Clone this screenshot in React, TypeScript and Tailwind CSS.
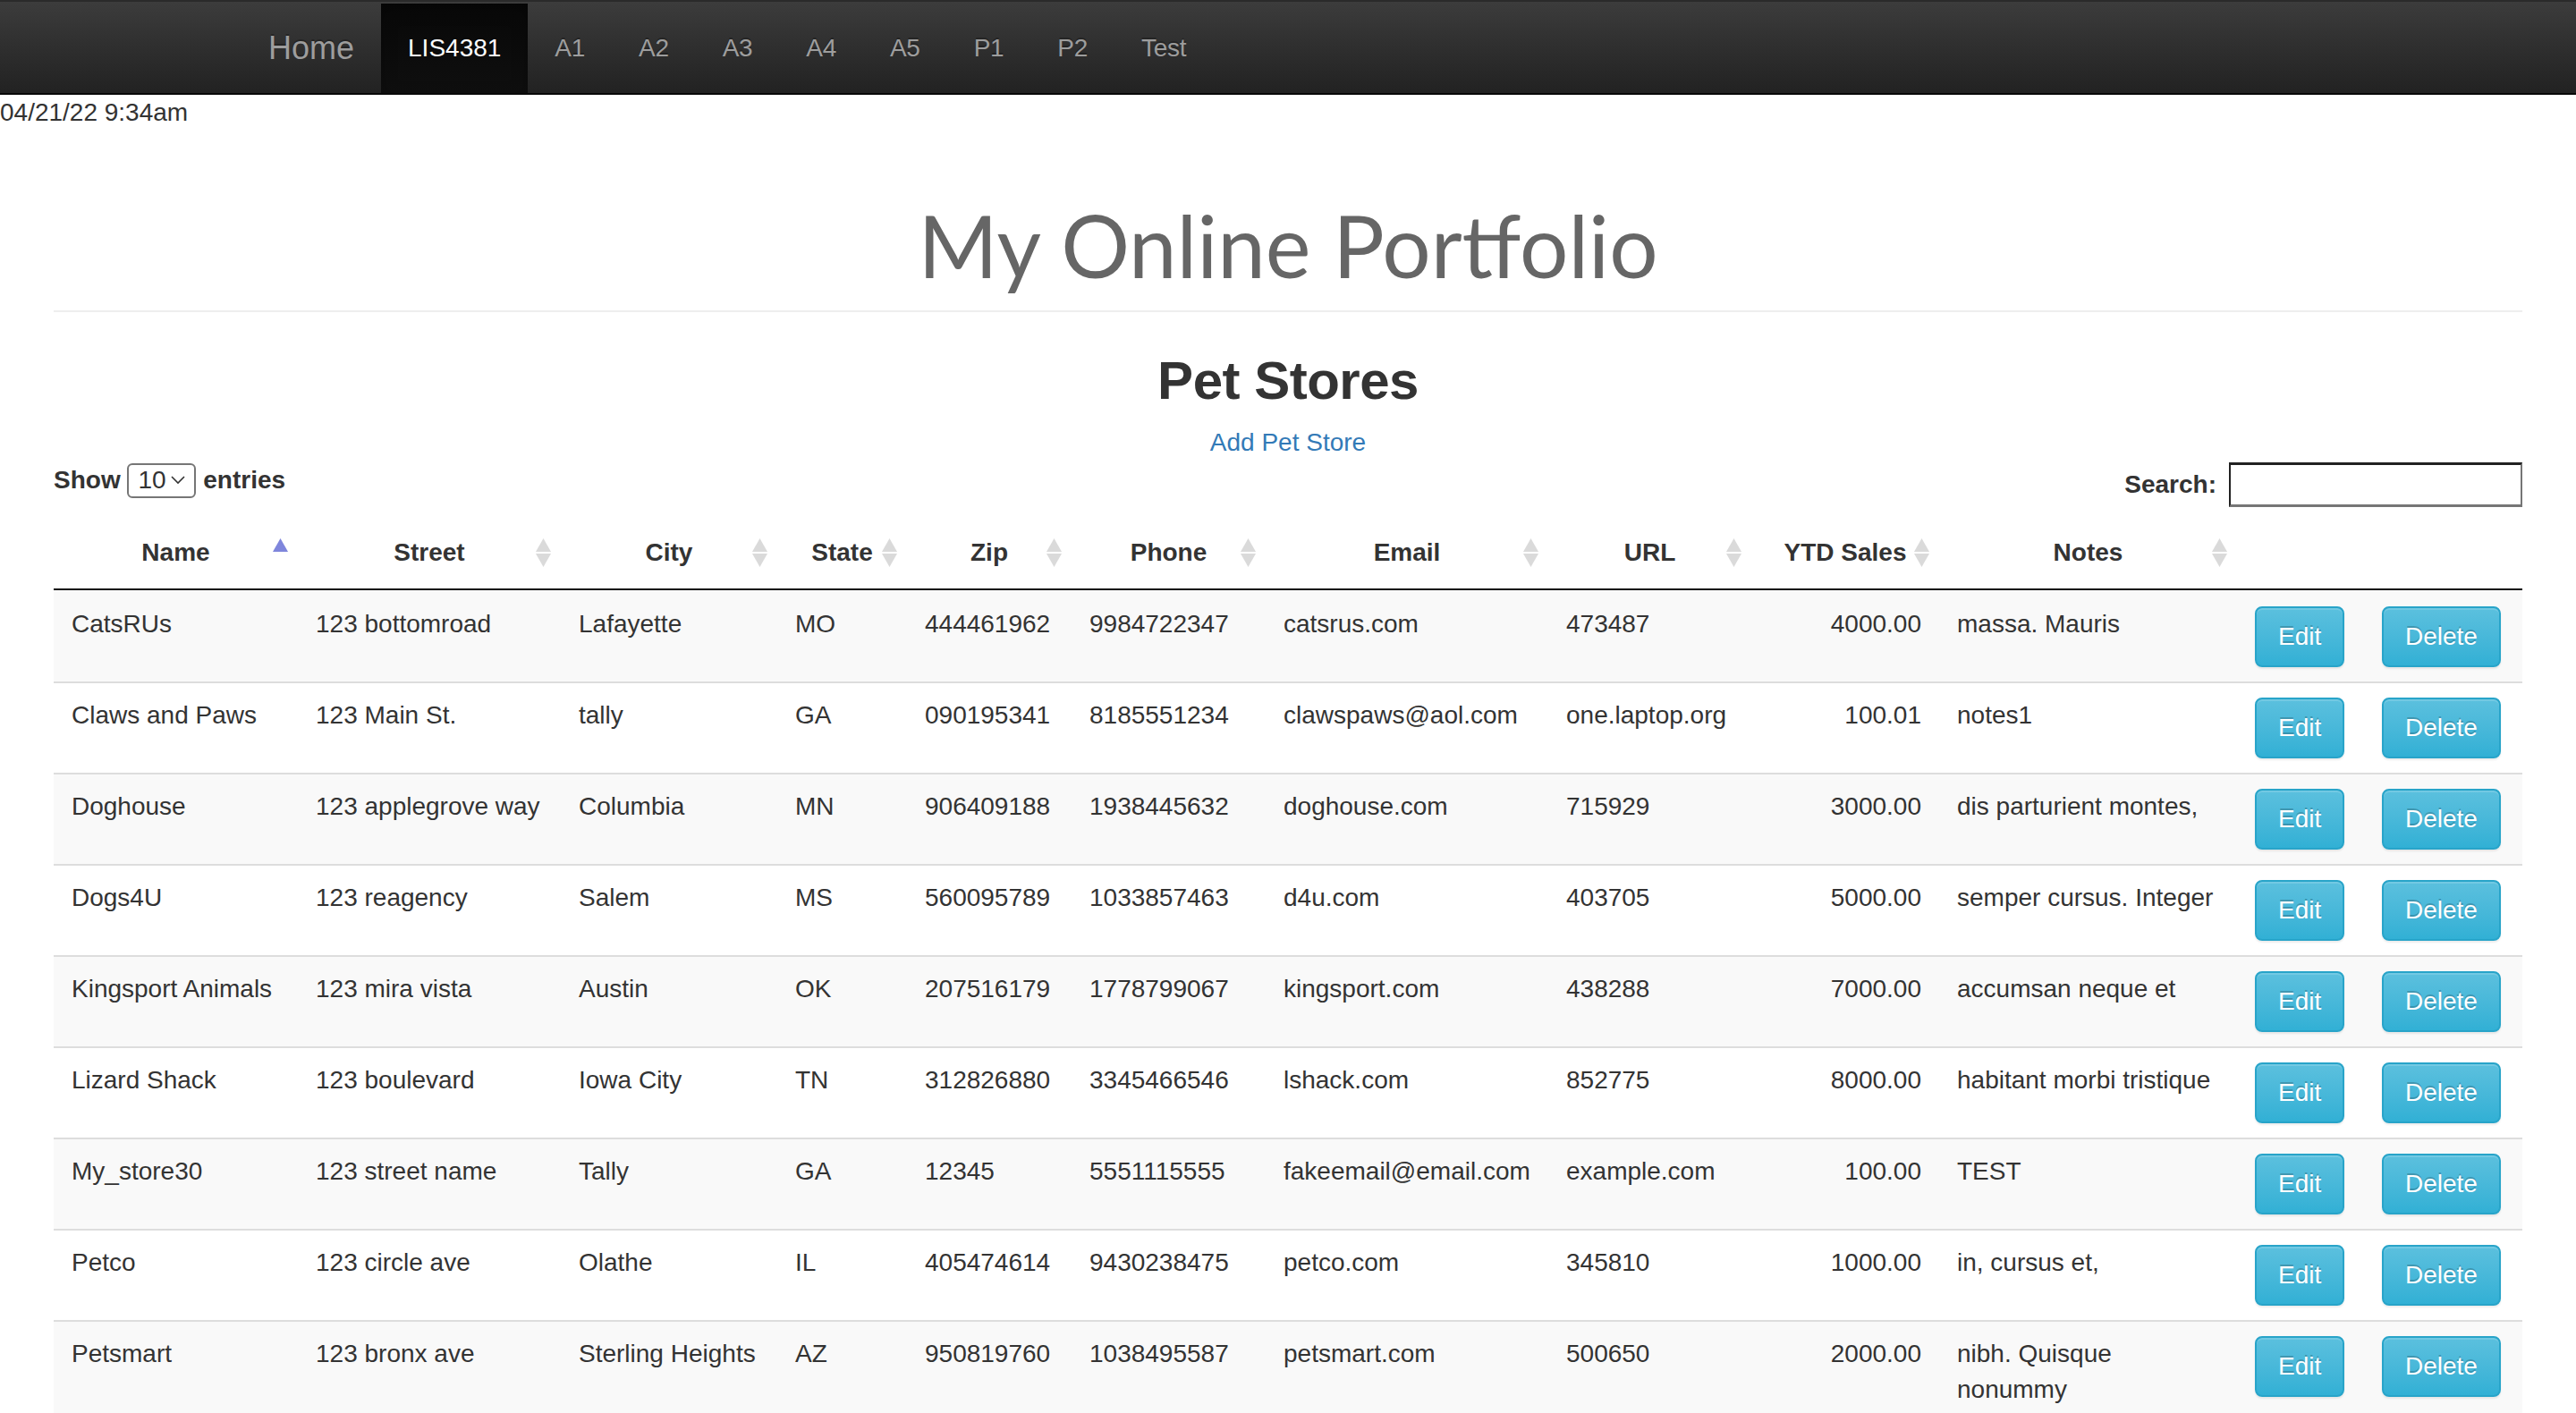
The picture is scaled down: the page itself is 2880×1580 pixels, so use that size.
import React from "react";

type Row = string[];

const rows: Row[] = [
  ["CatsRUs", "123 bottomroad", "Lafayette", "MO", "444461962", "9984722347", "catsrus.com", "473487", "4000.00", "massa. Mauris"],
  ["Claws and Paws", "123 Main St.", "tally", "GA", "090195341", "8185551234", "clawspaws@aol.com", "one.laptop.org", "100.01", "notes1"],
  ["Doghouse", "123 applegrove way", "Columbia", "MN", "906409188", "1938445632", "doghouse.com", "715929", "3000.00", "dis parturient montes,"],
  ["Dogs4U", "123 reagency", "Salem", "MS", "560095789", "1033857463", "d4u.com", "403705", "5000.00", "semper cursus. Integer"],
  ["Kingsport Animals", "123 mira vista", "Austin", "OK", "207516179", "1778799067", "kingsport.com", "438288", "7000.00", "accumsan neque et"],
  ["Lizard Shack", "123 boulevard", "Iowa City", "TN", "312826880", "3345466546", "lshack.com", "852775", "8000.00", "habitant morbi tristique"],
  ["My_store30", "123 street name", "Tally", "GA", "12345", "5551115555", "fakeemail@email.com", "example.com", "100.00", "TEST"],
  ["Petco", "123 circle ave", "Olathe", "IL", "405474614", "9430238475", "petco.com", "345810", "1000.00", "in, cursus et,"],
  ["Petsmart", "123 bronx ave", "Sterling Heights", "AZ", "950819760", "1038495587", "petsmart.com", "500650", "2000.00", "nibh. Quisque nonummy"],
];

const headers = ["Name", "Street", "City", "State", "Zip", "Phone", "Email", "URL", "YTD Sales", "Notes"];

function SortBoth() {
  return (
    <svg className="absolute right-[10px] top-[24px]" width="19" height="32" viewBox="0 0 19 32">
      <polygon points="1,15 9.5,0 18,15" fill="#dadada" />
      <polygon points="1,17 18,17 9.5,32" fill="#dadada" />
    </svg>
  );
}

function SortAsc() {
  return (
    <svg className="absolute right-[10px] top-[24px]" width="19" height="32" viewBox="0 0 19 32">
      <polygon points="1,15 9.5,0 18,15" fill="#7f86dc" />
    </svg>
  );
}

function Btn({ label }: { label: string }) {
  return (
    <button className="h-[68px] px-[24px] rounded-[8px] border-2 border-[#28a4c9] bg-linear-to-b from-[#5bc0de] to-[#31b0d5] text-white text-[28px] leading-[40px] [text-shadow:0_-2px_0_rgba(0,0,0,0.2)] shadow-[inset_0_2px_0_rgba(255,255,255,0.15),0_2px_2px_rgba(0,0,0,0.075)]">
      {label}
    </button>
  );
}

export default function App() {
  const navItems = ["A1", "A2", "A3", "A4", "A5", "P1", "P2", "Test"];
  return (
    <div className="min-h-screen bg-white text-[#333] text-[28px] leading-[40px]" style={{ fontFamily: '"Liberation Sans", Arial, sans-serif' }}>
      {/* Navbar */}
      <div className="border-t-2 border-t-[#2a2a2a] border-b-2 border-b-[#080808] pt-[2px] bg-linear-to-b from-[#3c3c3c] to-[#222]">
        <div className="h-[100px] flex items-stretch pl-[270px]">
          <a className="flex items-center px-[30px] text-[36px] text-[#9d9d9d] [text-shadow:0_-2px_0_rgba(0,0,0,0.25)]">Home</a>
          <a className="flex items-center px-[30px] text-[28px] text-white bg-linear-to-b from-[#080808] to-[#0f0f0f] shadow-[inset_0_6px_18px_rgba(0,0,0,0.25)] [text-shadow:0_-2px_0_rgba(0,0,0,0.25)]">LIS4381</a>
          {navItems.map((n) => (
            <a key={n} className="flex items-center px-[30px] text-[28px] text-[#9d9d9d] tracking-[-0.3px] [text-shadow:0_-2px_0_rgba(0,0,0,0.25)]">
              {n}
            </a>
          ))}
        </div>
      </div>

      <div className="h-[40px]">04/21/22 9:34am</div>

      <div className="px-[60px]">
        <div className="mt-[80px] text-center text-[96px] leading-[96px] text-[#666] tracking-[0px]" style={{ fontFamily: 'Lato, "Open Sans", sans-serif' }}>
          My Online Portfolio
        </div>
        <div className="mt-[25px] border-t-2 border-[#eee]" />

        <h2 className="mt-[44px] text-center text-[60px] leading-[66px] font-bold text-[#333] tracking-[-0.5px]">Pet Stores</h2>
        <div className="mt-[16px] text-center">
          <a className="text-[#337ab7]">Add Pet Store</a>
        </div>

        <div className="mt-[2px] flex justify-between items-start">
          <div className="h-[40px] flex items-center font-bold whitespace-pre">
            <span>Show </span>
            <span className="inline-flex items-center justify-between h-[39px] w-[77px] border-2 border-[#767676] rounded-[6px] pl-[10px] pr-[10px] font-normal">
              <span>10</span>
              <svg width="16" height="10" viewBox="0 0 16 10">
                <polyline points="1,1 8,8 15,1" fill="none" stroke="#333" strokeWidth="1.6" />
              </svg>
            </span>
            <span> entries</span>
          </div>
          <div className="h-[50px] flex items-center font-bold">
            <span>Search:</span>
            <span className="ml-[14px] w-[328px] h-[50px] border-t-[3px] border-b-[3px] border-x-2 border-t-[#222] border-l-[#222] border-r-[#767676] border-b-[#767676] bg-white" />
          </div>
        </div>

        <table className="mt-[11px] w-[2760px] table-fixed border-separate border-spacing-0">
          <colgroup>
            <col className="w-[273px]" />
            <col className="w-[294px]" />
            <col className="w-[242px]" />
            <col className="w-[145px]" />
            <col className="w-[184px]" />
            <col className="w-[217px]" />
            <col className="w-[316px]" />
            <col className="w-[227px]" />
            <col className="w-[210px]" />
            <col className="w-[333px]" />
            <col className="w-[142px]" />
            <col className="w-[177px]" />
          </colgroup>
          <thead>
            <tr>
              {headers.map((h, i) => (
                <th key={h} className="relative px-[36px] py-[20px] text-center font-bold whitespace-nowrap border-b-2 border-[#111]">
                  {h}
                  {i === 0 ? <SortAsc /> : <SortBoth />}
                </th>
              ))}
              <th className="border-b-2 border-[#111]" />
              <th className="border-b-2 border-[#111]" />
            </tr>
          </thead>
          <tbody>
            {rows.map((r, ri) => {
              const bg = ri % 2 === 0 ? "bg-[#f9f9f9]" : "bg-white";
              const bt = ri === 0 ? "border-t-2 border-t-transparent" : "border-t-2 border-t-[#ddd]";
              return (
                <tr key={ri} className={bg}>
                  {r.map((c, ci) => (
                    <td
                      key={ci}
                      className={`${bt} align-top px-[20px] py-[16px] ${ci === 9 ? "" : "whitespace-nowrap"} ${ci === 8 ? "text-right" : "text-left"}`}
                    >
                      {c}
                    </td>
                  ))}
                  <td className={`${bt} align-top px-[20px] py-[16px]`}>
                    <Btn label="Edit" />
                  </td>
                  <td className={`${bt} align-top pl-[20px] py-[16px]`}>
                    <Btn label="Delete" />
                  </td>
                </tr>
              );
            })}
          </tbody>
        </table>
      </div>
    </div>
  );
}
